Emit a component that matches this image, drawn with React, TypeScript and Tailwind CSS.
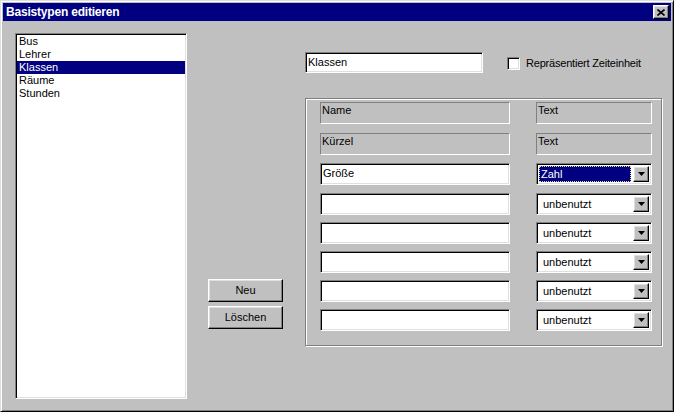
import React from "react"

const font = { fontFamily: '"Liberation Sans", Arial, sans-serif' }

// classic 3D borders
const sunken =
  "border border-t-[#808080] border-l-[#808080] border-b-white border-r-white shadow-[inset_1px_1px_0_#000,inset_-1px_-1px_0_#dfdfdf]"
const raised =
  "border border-t-white border-l-white border-b-black border-r-black shadow-[inset_-1px_-1px_0_#808080,inset_1px_1px_0_#dfdfdf]"
const etched = "border border-t-[#808080] border-l-[#808080] border-b-white border-r-white"

const types = ["Bus", "Lehrer", "Klassen", "Räume", "Stunden"]

function Arrow() {
  return (
    <svg width="7" height="4" viewBox="0 0 7 4">
      <polygon points="0,0 7,0 3.5,4" fill="#000" />
    </svg>
  )
}

function Combo({ value, selected }: { value: string; selected?: boolean }) {
  return (
    <div className={`${sunken} bg-white w-[116px] h-[22px] flex items-stretch p-[2px] pr-[2px]`}>
      {selected ? (
        <div className="flex-1 mr-[2px] bg-[#000080] border border-dotted border-[#d8d890] text-white pl-[1px] leading-[14px]">
          {value}
        </div>
      ) : (
        <div className="flex-1 pl-[4px] leading-[17px]">{value}</div>
      )}
      <div className={`${raised} bg-[#c0c0c0] w-[16px] flex items-center justify-center`}>
        <Arrow />
      </div>
    </div>
  )
}

function Field({ value }: { value?: string }) {
  return (
    <div className={`${sunken} bg-white w-[190px] h-[22px] pl-[2px] leading-[19px]`}>{value}</div>
  )
}

function Label({ text, wide }: { text: string; wide?: boolean }) {
  return (
    <div className={`${etched} ${wide ? "w-[190px]" : "w-[116px]"} h-[22px] pl-[1px] leading-[14px]`}>
      {text}
    </div>
  )
}

export default function App() {
  const rows = ["", "", "", "", ""]
  return (
    <div
      style={font}
      className="w-[674px] h-[412px] bg-[#c0c0c0] text-[11px] text-black border border-t-[#dfdfdf] border-l-[#dfdfdf] border-b-black border-r-black shadow-[inset_1px_1px_0_#fff,inset_-1px_-1px_0_#808080] p-[2px] flex flex-col"
    >
      {/* title bar */}
      <div className="h-[18px] bg-[#000080] flex items-center justify-between pl-[3px] pr-[2px]">
        <span className="text-white font-bold text-[12px] tracking-[-0.2px]">Basistypen editieren</span>
        <div className={`${raised} bg-[#c0c0c0] w-[16px] h-[14px] flex items-center justify-center`}>
          <svg width="8" height="7" viewBox="0 0 8 7">
            <path d="M0.5 0.5 L7.5 6.5 M7.5 0.5 L0.5 6.5" stroke="#000" strokeWidth="1.6" />
          </svg>
        </div>
      </div>

      <div className="flex flex-1 items-start">
        {/* type list */}
        <div className={`${sunken} bg-white ml-[12px] mt-[12px] w-[172px] h-[366px] py-[1px] px-[1px]`}>
          {types.map((t) => (
            <div
              key={t}
              className={`h-[13px] leading-[13px] pl-[2px] ${t === "Klassen" ? "bg-[#000080] text-white" : ""}`}
            >
              {t}
            </div>
          ))}
        </div>

        {/* actions */}
        <div className="ml-[21px] pt-[258px] flex flex-col gap-[4px]">
          <button className={`${raised} bg-[#c0c0c0] w-[75px] h-[23px]`}>Neu</button>
          <button className={`${raised} bg-[#c0c0c0] w-[75px] h-[23px]`}>Löschen</button>
        </div>

        {/* type details */}
        <div className="ml-[22px] pt-[31px] flex flex-col">
          <div className="flex items-center">
            <div className={`${sunken} bg-white w-[178px] h-[21px] pl-[2px] leading-[18px]`}>Klassen</div>
            <div className={`${sunken} bg-white w-[13px] h-[13px] ml-[24px] mt-[2px]`} />
            <span className="ml-[6px] mt-[1px] tracking-[-0.2px]">Repräsentiert Zeiteinheit</span>
          </div>

          <div className="mt-[25px] w-[357px] h-[248px] border border-[#808080] shadow-[1px_1px_0_#fff,inset_1px_1px_0_#fff] pl-[14px] pt-[3px] flex flex-col">
            <div className="flex gap-[26px]">
              <Label text="Name" wide />
              <Label text="Text" />
            </div>
            <div className="flex gap-[26px] mt-[9px]">
              <Label text="Kürzel" wide />
              <Label text="Text" />
            </div>
            <div className="flex gap-[26px] mt-[8px]">
              <Field value="Größe" />
              <Combo value="Zahl" selected />
            </div>
            {rows.map((_, i) => (
              <div key={i} className={`flex gap-[26px] ${i === 0 ? "mt-[8px]" : "mt-[7px]"}`}>
                <Field />
                <Combo value="unbenutzt" />
              </div>
            ))}
          </div>
        </div>
      </div>
    </div>
  )
}
